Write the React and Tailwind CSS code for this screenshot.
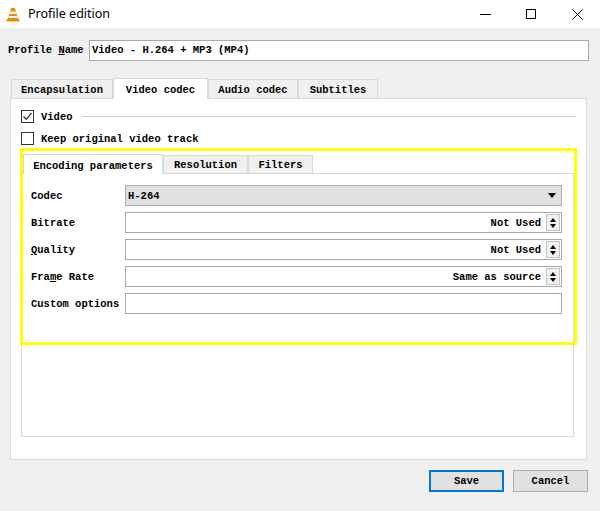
import React from "react";

const font = "font-['Liberation_Mono',monospace] text-[10.5px] font-bold text-black";
const mono = `${font} pt-[2px]`;

function VlcIcon() {
  return (
    <svg width="14" height="15" viewBox="0 0 14 15">
      <path d="M5.2 1 L8.8 1 L12.2 12 L1.8 12 Z" fill="#f08c00" />
      <path d="M4.4 4.6 L9.6 4.6 L10.3 7 L3.7 7 Z" fill="#ffffff" />
      <path d="M3.1 9 L10.9 9 L11.5 11 L2.5 11 Z" fill="#ffffff" />
      <rect x="0.5" y="12" width="13" height="2.5" rx="0.8" fill="#f08c00" />
    </svg>
  );
}

function Checkbox({ checked }) {
  return (
    <div className="w-[13px] h-[13px] border border-[#333333] bg-white flex items-center justify-center">
      {checked && (
        <svg width="11" height="11" viewBox="0 0 11 11">
          <path d="M1.5 5.5 L4.3 8.3 L9.5 2.2" fill="none" stroke="#333333" strokeWidth="1.3" />
        </svg>
      )}
    </div>
  );
}

function Tab({ label, width, selected }) {
  if (selected) {
    return (
      <div
        className={`h-[21px] bg-white border border-b-0 border-[#d9d9d9] flex items-center justify-center -mb-px relative z-10 pt-[4px] ${font}`}
        style={{ width }}
      >
        {label}
      </div>
    );
  }
  return (
    <div
      className={`h-[19px] bg-[#f0f0f0] border border-b-0 border-[#d9d9d9] flex items-center justify-center pt-[3px] ${font}`}
      style={{ width }}
    >
      {label}
    </div>
  );
}

function Spinner() {
  return (
    <div className="w-[14px] h-[17px] mr-px border border-[#c4c4c4] bg-[#f0f0f0] flex flex-col items-center justify-center gap-[2px]">
      <div className="w-0 h-0 border-l-[3px] border-r-[3px] border-b-[4px] border-l-transparent border-r-transparent border-b-black" />
      <div className="w-0 h-0 border-l-[3px] border-r-[3px] border-t-[4px] border-l-transparent border-r-transparent border-t-black" />
    </div>
  );
}

function Row({ label, children }) {
  return (
    <div className="flex items-center h-[21px]">
      <div className={`w-[94px] ${mono}`}>{label}</div>
      {children}
    </div>
  );
}

function SpinField({ value }) {
  return (
    <div className="flex-1 h-[21px] bg-white border border-[#a9a9a9] flex items-center justify-end">
      <span className={`${mono} mr-[5px]`}>{value}</span>
      <Spinner />
    </div>
  );
}

export default function App() {
  return (
    <div className="w-[600px] h-[511px] bg-[#f0f0f0] flex flex-col overflow-hidden">
      {/* title bar */}
      <div className="h-[28px] bg-white flex items-center pl-[6px]">
        <VlcIcon />
        <span className="ml-[8px] font-['Noto_Sans',sans-serif] text-[12.5px] text-black">Profile edition</span>
        <div className="ml-auto flex items-center h-full">
          <div className="w-[46px] h-full flex items-center justify-center">
            <div className="w-[11px] h-px bg-black" />
          </div>
          <div className="w-[46px] h-full flex items-center justify-center">
            <div className="w-[10px] h-[10px] border border-black" />
          </div>
          <div className="w-[46px] h-full flex items-center justify-center">
            <svg width="11" height="11" viewBox="0 0 11 11">
              <path d="M0.5 0.5 L10.5 10.5 M10.5 0.5 L0.5 10.5" stroke="#000" strokeWidth="1" />
            </svg>
          </div>
        </div>
      </div>

      {/* profile name */}
      <div className="flex items-center pl-[8px] mt-[12px] h-[20px]">
        <span className={`w-[81px] ${mono}`}>
          Profile <span className="underline">N</span>ame
        </span>
        <div className="w-[500px] h-[21px] bg-white border border-[#a9a9a9] flex items-center pl-[2px]">
          <span className={mono}>Video - H.264 + MP3 (MP4)</span>
        </div>
      </div>

      {/* main tabs */}
      <div className="ml-[10px] mt-[17px] w-[577px]">
        <div className="flex items-end h-[21px] pl-px">
          <Tab label="Encapsulation" width={102} />
          <Tab label="Video codec" width={95} selected />
          <Tab label="Audio codec" width={90} />
          <Tab label="Subtitles" width={80} />
        </div>
        <div className="relative h-[362px] bg-white border border-[#d9d9d9] pl-[10px] pt-[11px]">
          <div className="flex items-center h-[13px] gap-[7px]">
            <Checkbox checked />
            <span className={mono}>Video</span>
            <div className="ml-[2px] w-[494px] h-px bg-[#d0d0d0]" />
          </div>
          <div className="flex items-center h-[13px] gap-[7px] mt-[9px]">
            <Checkbox />
            <span className={mono}>Keep original video track</span>
          </div>

          {/* inner tabs */}
          <div className="mt-[8px] w-[553px]">
            <div className="flex items-end h-[20px] pl-[2px]">
              <div className={`w-[140px] h-[20px] bg-white border border-b-0 border-[#d9d9d9] flex items-center justify-center -mb-px relative z-10 pt-[4px] ${font}`}>
                Encoding parameters
              </div>
              <div className={`w-[85px] h-[18px] bg-[#f0f0f0] border border-b-0 border-[#d9d9d9] flex items-center justify-center pt-[3px] ${font}`}>
                Resolution
              </div>
              <div className={`w-[65px] h-[18px] bg-[#f0f0f0] border border-b-0 border-[#d9d9d9] flex items-center justify-center pt-[3px] ${font}`}>
                Filters
              </div>
            </div>
            <div className="h-[264px] bg-white border border-[#d9d9d9] pl-[9px] pr-[11px] pt-[11px] flex flex-col gap-[6px]">
              <Row label="Codec">
                <div className="flex-1 h-[21px] bg-[#e1e1e1] border border-[#adadad] flex items-center pl-[2px]">
                  <span className={mono}>H-264</span>
                  <div className="ml-auto mr-[5px] w-0 h-0 border-l-[4px] border-r-[4px] border-t-[5px] border-l-transparent border-r-transparent border-t-black" />
                </div>
              </Row>
              <Row label="Bitrate">
                <SpinField value="Not Used" />
              </Row>
              <Row label={<><span className="underline">Q</span>uality</>}>
                <SpinField value="Not Used" />
              </Row>
              <Row label={<>Fra<span className="underline">m</span>e Rate</>}>
                <SpinField value="Same as source" />
              </Row>
              <Row label="Custom options">
                <div className="flex-1 h-[21px] bg-white border border-[#a9a9a9]" />
              </Row>
            </div>
          </div>

          {/* highlight overlay */}
          <div className="absolute left-[9px] top-[49px] w-[557px] h-[197px] border-[3px] border-[#ffff00] pointer-events-none z-20" />
        </div>
      </div>

      {/* buttons */}
      <div className="flex justify-end gap-[9px] pr-[12px] mt-[10px]">
        <button className={`w-[75px] h-[22px] bg-[#e1e1e1] border-2 border-[#0078d7] flex items-center justify-center ${mono}`}>
          Save
        </button>
        <button className={`w-[75px] h-[22px] bg-[#e1e1e1] border border-[#adadad] flex items-center justify-center ${mono}`}>
          Cancel
        </button>
      </div>
    </div>
  );
}
